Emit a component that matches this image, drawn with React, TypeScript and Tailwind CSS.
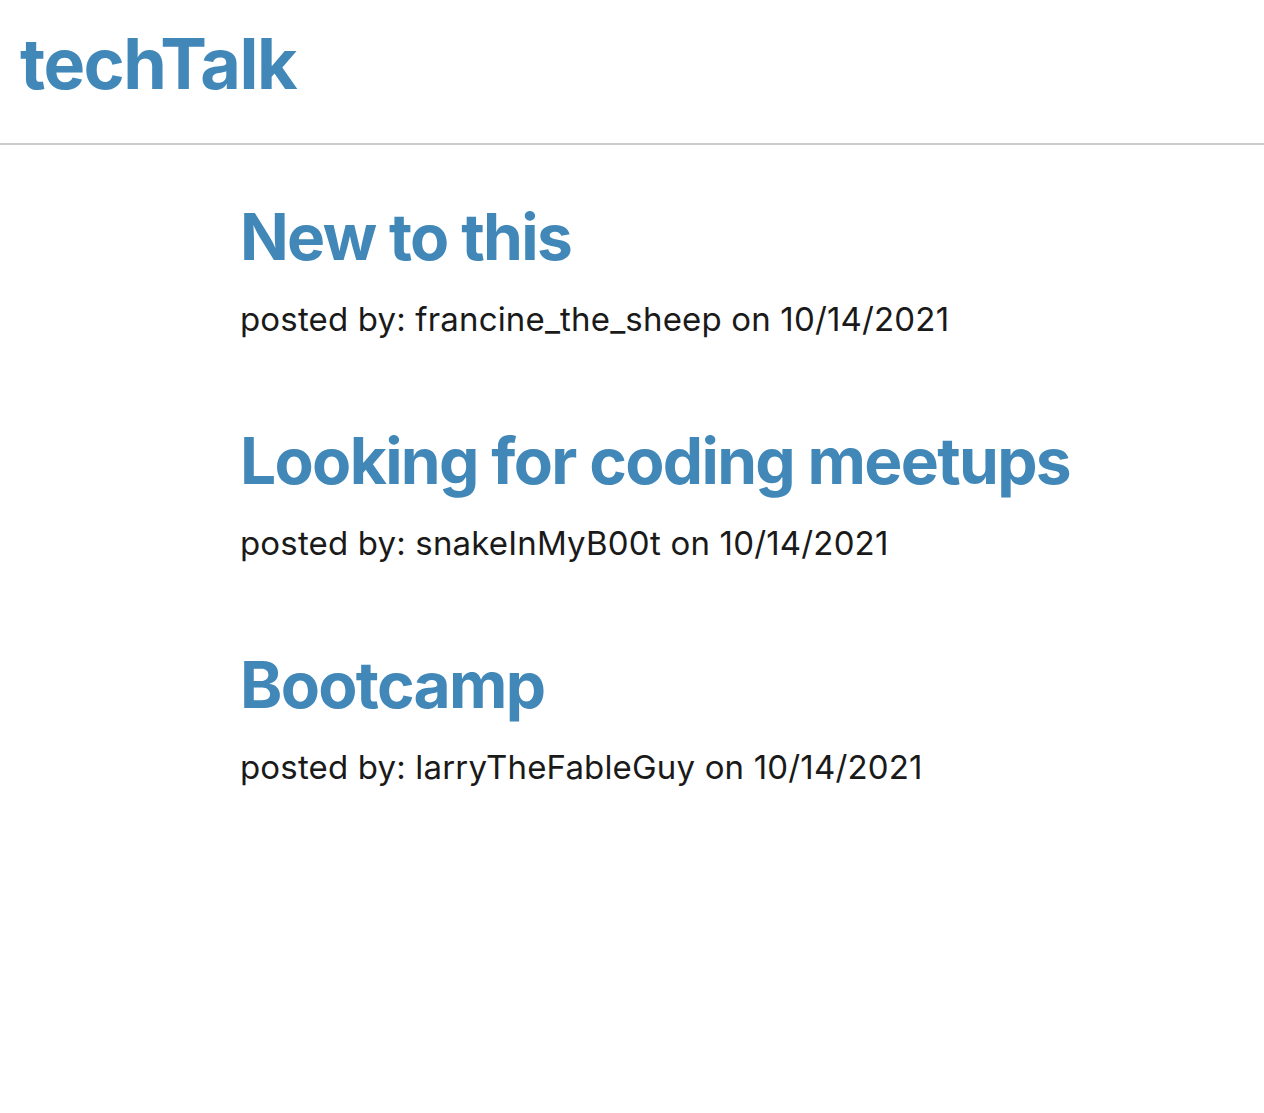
import React from "react";

const posts = [
  { title: "New to this", author: "francine_the_sheep", date: "10/14/2021" },
  { title: "Looking for coding meetups", author: "snakeInMyB00t", date: "10/14/2021" },
  { title: "Bootcamp", author: "larryTheFableGuy", date: "10/14/2021" },
];

export default function App() {
  return (
    <div className="min-h-screen bg-white font-['Inter',sans-serif]">
      <header className="h-[145px] border-b-2 border-[#cccccc] px-5 flex items-start">
        <h1 className="mt-[22px] text-[70px] leading-[84px] font-bold tracking-[-0.022em] text-[#4188b9]">techTalk</h1>
      </header>
      <main className="pl-[240px] pt-[52px] flex flex-col gap-[82px]">
        {posts.map((p) => (
          <div key={p.title} className="flex flex-col">
            <h2 className="text-[64px] leading-[80px] font-bold tracking-[-0.026em] text-[#4188b9]">{p.title}</h2>
            <p className="mt-[22px] text-[33px] leading-[40px] tracking-[0.005em] text-[#1a1a1a]">
              posted by: {p.author} on {p.date}
            </p>
          </div>
        ))}
      </main>
    </div>
  );
}
